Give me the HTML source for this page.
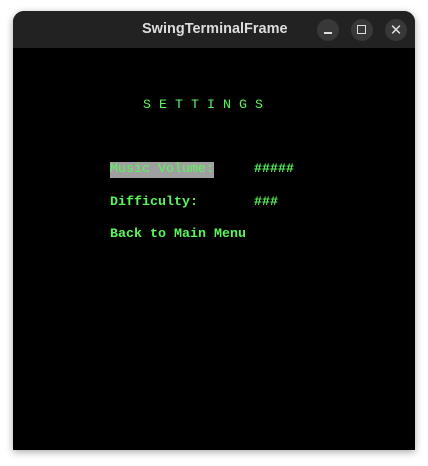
<!DOCTYPE html>
<html><head><style>
body{margin:0;width:428px;height:466px;background:#fff;position:relative;overflow:hidden;font-family:"Liberation Mono",monospace}
.win{position:absolute;left:13px;top:11px;width:402px;height:439px;background:#000;border-radius:11px 11px 0 0;box-shadow:0 2px 8px rgba(0,0,0,.35);overflow:hidden}
.tb{position:absolute;left:0;top:0;width:100%;height:37px;background:#222;color:#ddd;font:bold 14.5px "Liberation Sans",sans-serif}
.tb .t{position:absolute;left:129px;top:10px;width:144px;text-align:center}
.btn{position:absolute;top:8px;width:22px;height:22px;border-radius:50%;background:#383838}
.txt{position:absolute;font-size:13.33px;line-height:16px;color:#5cf55c;white-space:pre}
.b{font-weight:bold}
</style></head><body>
<div class="win">
<div class="tb"><span class="t">SwingTerminalFrame</span>
<div class="btn" style="left:304px"><div style="position:absolute;left:7px;top:13px;width:8px;height:1.5px;background:#ddd"></div></div>
<div class="btn" style="left:338px"><div style="position:absolute;left:6px;top:6px;width:7px;height:7px;border:1.5px solid #ddd"></div></div>
<div class="btn" style="left:372px;color:#ddd;font:15px 'DejaVu Sans',sans-serif;text-align:center;line-height:22px">✕</div>
</div>
<div class="txt" style="left:130px;top:87px">S E T T I N G S</div>
<div class="txt" style="left:97px;top:151px;background:#a0a0a0;color:#5cf55c;height:16px">Music Volume:</div>
<div class="txt b" style="left:241px;top:151px">#####</div>
<div class="txt b" style="left:97px;top:184px">Difficulty:</div>
<div class="txt b" style="left:241px;top:184px">###</div>
<div class="txt b" style="left:97px;top:216px">Back to Main Menu</div>
</div>
</body></html>
